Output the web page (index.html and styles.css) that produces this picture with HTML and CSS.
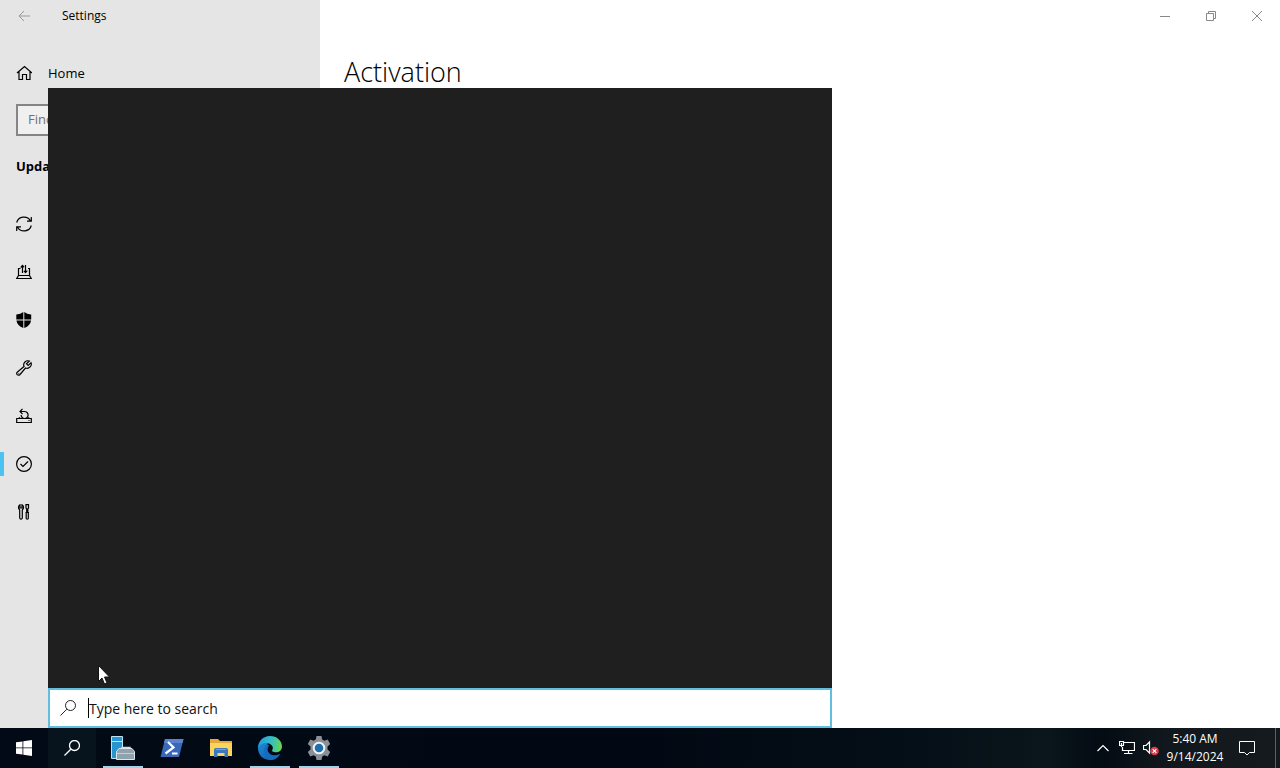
FILE: index.html
```html
<!DOCTYPE html>
<html lang="en">
<head>
<meta charset="utf-8">
<meta name="viewport" content="width=device-width, initial-scale=1">
<title>Settings</title>
<link rel="stylesheet" href="styles.css">
</head>
<body>
<div class="desktop">
  <div class="window">
    <aside class="sidebar">
      <header class="titlebar">
        <button class="back" type="button" aria-label="Back"><svg width="12" height="12" viewBox="0 0 12 12"><path d="M12 6H1M6 1L1 6l5 5"/></svg></button>
        <span class="app-name">Settings</span>
      </header>
      <a class="nav-item home" href="#"><svg class="icon" viewBox="0 0 16 16"><path d="M1 8L8.500 1.500 16 8M3 6.500V14.500H6.500V9.500H10.500V14.500H14V6.500"/></svg><span>Home</span></a>
      <input class="find" type="text" placeholder="Find a setting" aria-label="Find a setting">
      <h2 class="section">Update &amp; Security</h2>
      <nav class="nav">
        <a class="nav-item" href="#" aria-label="Windows Update"><svg class="icon" viewBox="0 0 16 16"><path d="M.7 6.500A7.500 7.200 0 0 1 14.500 4.800M15.300 9.500A7.500 7.200 0 0 1 1.500 11.200M15.300 1V5.200H11M.7 15V10.800H5"/></svg></a>
        <a class="nav-item" href="#" aria-label="Delivery Optimization"><svg class="icon" viewBox="0 0 16 16"><path d="M4.500 4.500H2.500V11.500L.7 14.500H15.300L13.500 11.500V4.500H12M2.500 11.500H13.500M6.500 9V1.500M4.700 3.500L6.500 1.500 8 3.200M9.500 1V8.500M8 6.800L9.500 8.500 11.300 6.700"/></svg></a>
        <a class="nav-item" href="#" aria-label="Windows Security"><svg class="icon" viewBox="0 0 16 16"><path class="solid" d="M7.300 0V7.400H.3V2.400Q4.500 2.500 7.300 0ZM8.300 0Q11 2.500 15.200 2.400V7.400H8.300ZM.4 8.400H7.300V16Q1.200 13.500.4 8.400ZM8.300 8.400H15.100Q14.300 13.500 8.300 16Z"/></svg></a>
        <a class="nav-item" href="#" aria-label="Troubleshoot"><svg class="icon" viewBox="0 0 16 16"><path d="M13.300 1L10.500 3.800 12.200 5.500 15 2.700C16.200 5.700 13.300 9.300 9.500 8L4 14.500C2 16.500-.7 13.800 1.500 12L8 6.500C6.700 2.700 10 0 13.300 1ZM2.500 13.500H3.200"/></svg></a>
        <a class="nav-item" href="#" aria-label="Recovery"><svg class="icon" viewBox="0 0 16 16"><path d="M4 9.500L2.500 10.500H.7V14.500H15.300V10.500H13.500L12 9.500M2.500 10.500H13.500M12.500 12.500H13.500M4.500 3.500H8.500A3.500 3.500 0 1 1 5.100 7M6.500 .8L4 3.500 6.500 6"/></svg></a>
        <a class="nav-item current" href="#" aria-label="Activation" aria-current="page"><svg class="icon" viewBox="0 0 16 16"><circle cx="8" cy="8" r="7.400"/><path d="M4.500 8L7 10.500 12 5.500"/></svg></a>
        <a class="nav-item" href="#" aria-label="For developers"><svg class="icon" viewBox="0 0 16 16"><path d="M4 .8V4H6V.8C8.200 2 7.700 4.700 6.300 6V14Q5 16.500 3.700 14V6C2.300 4.700 1.800 2 4 .8ZM10 .7H12.500V4L11.800 5V8.500H10.700V5L10 4ZM9.500 8.500H13M10.200 8.500V14.500Q11.300 16 12.300 14.500V8.500"/></svg></a>
      </nav>
    </aside>
    <main class="content">
      <div class="controls">
        <button type="button" aria-label="Minimize"><svg width="12" height="12" viewBox="0 0 12 12"><path d="M1 6.500H11"/></svg></button>
        <button type="button" aria-label="Restore"><svg width="12" height="12" viewBox="0 0 12 12"><path d="M1.500 3.500H8.500V10.500H1.500ZM3.500 3V1.500H10.500V8.500H9"/></svg></button>
        <button type="button" aria-label="Close"><svg width="12" height="12" viewBox="0 0 12 12"><path d="M1 1L11 11M11 1L1 11"/></svg></button>
      </div>
      <h1 class="title">Activation</h1>
    </main>
  </div>

  <section class="search-panel" aria-label="Search">
    <div class="results"></div>
    <label class="search-box">
      <svg class="glass" viewBox="0 0 16 16"><circle cx="10.500" cy="5.500" r="5"/><path d="M6.800 9.200L.5 15.500"/></svg>
      <span class="caret"></span>
      <input type="text" placeholder="Type here to search" aria-label="Type here to search">
    </label>
  </section>

  <footer class="taskbar">
    <button class="task" type="button" aria-label="Start"><svg width="16" height="16" viewBox="0 0 16 16"><path fill="#fff" d="M0 2.300L6.500 1.400V7.500H0ZM7.300 1.300L16 0V7.500H7.300ZM0 8.300H6.500V14.500L0 13.700ZM7.300 8.300H16V16L7.300 14.700Z"/></svg></button>
    <button class="task active" type="button" aria-label="Search"><svg class="glass" viewBox="0 0 16 16"><circle cx="10.500" cy="5.500" r="5"/><path d="M6.800 9.200L.5 15.500"/></svg></button>
    <div class="apps">
      <button class="task app open" type="button" aria-label="Server Manager"><svg width="24" height="24" viewBox="0 0 24 24"><path fill="#2995cf" stroke="#b9e4f7" d="M.5.500H11.500V22.500H.5Z"/><path stroke="#b9e4f7" d="M1 5.500H11"/><path fill="none" stroke="#d5dde2" stroke-width="1.500" d="M11 14V11.500H19V14"/><path fill="#8fa2ae" stroke="#dce4e8" d="M5.500 15.500L8 12.500H21L23.500 15.500V23.500H5.500Z"/><path stroke="#c3ced5" d="M6 17.500H23"/></svg></button>
      <button class="task app" type="button" aria-label="PowerShell"><svg width="24" height="20" viewBox="0 0 24 20"><path fill="#3968b8" d="M5 1H23.500L19 19H.5Z"/><path fill="#5b83cc" d="M5 1H23.500L22.500 5H4Z"/><path fill="none" stroke="#fff" stroke-width="2.200" d="M8 4L13.500 9.500 5.500 15.500M12 15.500H17.500"/></svg></button>
      <button class="task app" type="button" aria-label="File Explorer"><svg width="22" height="20" viewBox="0 0 22 20"><path fill="#e5a83a" d="M0 1H8L10 3H22V18H0Z"/><path fill="#fbd45c" d="M0 5H22V18H0Z"/><path fill="#3c78bd" d="M4 19V12Q4 10 6 10H16Q18 10 18 12V19H14.500V15H7.500V19Z"/><path stroke="#6aa5dc" d="M6 11.500H16"/></svg></button>
      <button class="task app open" type="button" aria-label="Microsoft Edge"><svg width="24" height="24" viewBox="0 0 24 24"><defs><linearGradient id="edge-top" x1="0" y1=".4" x2="1" y2=".5"><stop offset="0" stop-color="#219be0"/><stop offset=".55" stop-color="#35bfc4"/><stop offset="1" stop-color="#68d84c"/></linearGradient><linearGradient id="edge-low" x1="0" y1="0" x2="1" y2="1"><stop offset="0" stop-color="#1b8edb"/><stop offset="1" stop-color="#1453a4"/></linearGradient></defs><path fill="url(#edge-low)" d="M0 12C0 7 6 5 10 7.500 8 10 8 15 11 18 14 20 18 20 22 18 19 23 15 24 12 24 5 24 0 19 0 12Z"/><path fill="#176bbd" d="M9 8C5 11 5 20 12 24 16 24 20 22 22 18 18 20 14 20 11.500 17.500 9 15 9 12 11 9.500Z"/><path fill="url(#edge-top)" d="M0 12C0 5 5 0 12 0 19 0 24 5 24 10.500 24 15 20 17 16 16 13.500 15.500 14 14.500 14.500 13.500 16 11 13 7 8.500 7 4.500 7 1 9 0 12Z"/></svg></button>
      <button class="task app open" type="button" aria-label="Settings"><svg width="24" height="24" viewBox="0 0 24 24"><path fill="#8a9095" d="M9.500 0H14.500L15.200 3.500 17.400 4.700 20.700 3.600 23.200 8 20.500 10.400V13.600L23.200 16 20.700 20.400 17.400 19.300 15.200 20.500 14.500 24H9.500L8.800 20.500 6.600 19.300 3.300 20.400.8 16 3.500 13.600V10.400L.8 8 3.300 3.600 6.600 4.700 8.800 3.500Z"/><circle cx="12" cy="12" r="5.300" fill="#1f6eab" stroke="#edf3f7" stroke-width="2"/></svg></button>
    </div>
    <div class="tray">
      <button type="button" aria-label="Show hidden icons"><svg width="12" height="8" viewBox="0 0 12 8"><path d="M.5 7L6 1.500 11.500 7"/></svg></button>
      <button type="button" aria-label="Network"><svg width="16" height="14" viewBox="0 0 16 14"><path d="M5 1.500H15.500V9.500H3.500V6M9.500 9.500V12.500M5 12.500H13.500M.5.500H4.500V4.500H.5ZM2.500 2V6"/></svg></button>
      <button type="button" aria-label="Volume muted"><svg width="16" height="16" viewBox="0 0 16 16"><path d="M.5 5.500H3L6.500 2V13L3 9.500H.5Z"/><circle cx="11.500" cy="11" r="4.300" fill="#d83b4c" stroke="none"/><path d="M9.700 9.200L13.300 12.800M13.300 9.200L9.700 12.800"/></svg></button>
    </div>
    <button class="clock" type="button"><time>5:40 AM</time><time>9/14/2024</time></button>
    <button class="notify" type="button" aria-label="Notifications"><svg width="16" height="16" viewBox="0 0 16 16"><path d="M.5 1.500H15.500V12.500H10.500L8 15 5.500 12.500H.5Z"/></svg></button>
    <button class="show-desktop" type="button" aria-label="Show desktop"></button>
  </footer>

  <svg class="pointer" width="13" height="20" viewBox="0 0 13 20" aria-hidden="true"><path d="M.5.500V16.500L4 13 6.500 19 9 18 6.500 12H11.500Z"/></svg>
</div>
</body>
</html>
```
FILE: styles.css
```css
* {
  box-sizing: border-box;
}

body {
  margin: 0;
  font: 13px/20px "Open Sans", "Noto Sans", sans-serif;
  color: #000;
}

button {
  margin: 0;
  padding: 0;
  border: 0;
  background: none;
  font: inherit;
  color: inherit;
}

button svg,
.icon,
.glass {
  display: block;
  fill: none;
}

.desktop {
  position: relative;
  display: flex;
  flex-direction: column;
  min-height: 100vh;
}

.window {
  flex: 1;
  display: flex;
}

.sidebar {
  flex: 0 0 25%;
  background: #e5e5e5;
}

.titlebar {
  display: flex;
  align-items: center;
  height: 32px;
}

.back {
  padding: 0 18px;
  stroke: #999;
}

.app-name {
  padding-left: 14px;
  font-size: 12px;
  line-height: 18px;
}

.nav-item {
  display: flex;
  align-items: center;
  gap: 16px;
  height: 48px;
  padding: 0 16px;
  color: #000;
  text-decoration: none;
}

.home {
  height: 40px;
  margin-top: 21px;
  margin-bottom: 11px;
}

.icon {
  width: 16px;
  height: 16px;
  stroke: #000;
  stroke-width: 1.2;
}

.icon .solid {
  fill: #000;
  stroke: none;
}

.find {
  display: block;
  width: calc(100% - 32px);
  height: 32px;
  margin: 0 16px;
  padding: 0 10px 2px;
  border: 2px solid #858585;
  background: #f0f0f0;
  font: inherit;
}

.find::placeholder {
  color: #707070;
  opacity: 1;
}

.section {
  margin: 20px 16px 24px;
  font-size: 13px;
  line-height: 20px;
  font-weight: 700;
}

.current {
  background: linear-gradient(#4cc2f1, #4cc2f1) left center / 4px 24px no-repeat;
}

.content {
  flex: 1;
}

.controls {
  display: flex;
  justify-content: flex-end;
}

.controls button {
  width: 46px;
  height: 32px;
  padding: 0 17px;
  stroke: #888;
}

.title {
  margin: 20px 24px;
  font-size: 27px;
  line-height: 40px;
  font-weight: 300;
}

.search-panel {
  position: absolute;
  top: 88px;
  bottom: 40px;
  left: 48px;
  width: 784px;
  max-width: calc(100% - 48px);
  display: flex;
  flex-direction: column;
}

.results {
  flex: 1;
  background: #1f1f1f;
}

.search-box {
  display: flex;
  align-items: center;
  height: 40px;
  padding: 0 10px;
  border: 2px solid #60bfdf;
  background: #fff;
}

.glass {
  width: 16px;
  height: 16px;
  stroke: #222;
}

.caret {
  width: 1px;
  height: 20px;
  margin-left: 12px;
  background: #000;
}

.search-box input {
  flex: 1;
  padding: 2px 0 0;
  border: 0;
  outline: 0;
  font: 14px/20px "Open Sans", "Noto Sans", sans-serif;
}

.search-box input::placeholder {
  color: #111;
  opacity: 1;
}

.taskbar {
  display: flex;
  height: 40px;
  background: linear-gradient(90deg, #010a16 0, #010813 50%, #050f17 72%, #0a151c 82%, #030b13 86%, #11181d 91%, #151a1e 100%);
  color: #fff;
}

.task {
  display: flex;
  align-items: center;
  justify-content: center;
  width: 48px;
}

.active {
  background: #07131d;
}

.active .glass {
  stroke: #fff;
  stroke-width: 1.3;
}

.apps {
  display: flex;
  gap: 9px;
  padding-left: 7px;
}

.app {
  width: 40px;
  border-bottom: 2px solid transparent;
  border-top: 2px solid transparent;
}

.open {
  border-bottom-color: #9ed3e9;
}

.tray {
  display: flex;
  align-items: center;
  gap: 10px;
  margin-left: auto;
  stroke: #fff;
  stroke-width: 1.2;
}

.tray button + button + button {
  margin-left: -2px;
}

.clock {
  display: flex;
  flex-direction: column;
  justify-content: center;
  align-items: center;
  width: 72px;
  font-size: 12px;
  line-height: 18px;
}

.notify {
  width: 44px;
  padding: 0 8px;
  stroke: #fff;
}

.show-desktop {
  width: 5px;
  border-left: 1px solid #5b6063;
}

.pointer {
  position: absolute;
  left: 98px;
  top: 665px;
  fill: #fff;
  stroke: #111;
}
```
